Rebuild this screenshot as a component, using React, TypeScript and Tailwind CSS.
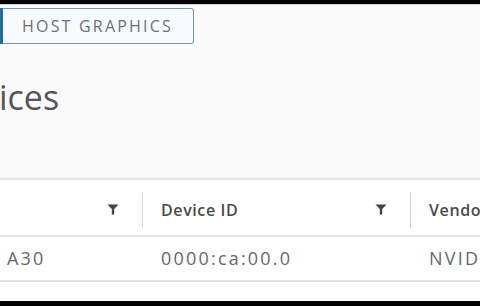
import React from "react";

function Filter({ className = "" }: { className?: string }) {
  return (
    <svg width="12" height="11" viewBox="0 0 12 11" className={className}>
      <path d="M0.5 0.5 H11.5 L7.2 5 V10.5 H4.8 V5 Z" fill="#444" />
    </svg>
  );
}

export default function App() {
  const font = { fontFamily: '"Open Sans", "Noto Sans", sans-serif' };
  return (
    <div className="w-[480px] h-[306px] overflow-hidden bg-black flex flex-col" style={font}>
      <div className="h-[4px] shrink-0 bg-black" />
      <div className="flex-1 flex flex-col bg-[#fafafa] border-t border-[#d4d4d4]">
        <div className="h-[39px] shrink-0 flex items-end">
          <div className="flex h-[36px] w-[194px]">
            <div className="w-[3px] h-full bg-[#1d6fa8]" />
            <div className="flex-1 h-full border border-l-0 border-[#6f9bbd] rounded-r-[3px] bg-[#f7fbff] flex items-center pl-[19px] text-[16px] tracking-[2.2px] text-[#707070] whitespace-nowrap">
              HOST GRAPHICS
            </div>
          </div>
        </div>
        <div className="h-[134px] shrink-0 pt-[33px]">
          <div className="text-[34px] leading-[40px] text-[#565656] ml-[-1px]">ices</div>
        </div>
        <div className="flex-1 bg-white flex flex-col">
          <div className="border-t-2 border-[#e3e3e3] h-[59px] flex items-center pt-[4px] border-b-2 border-b-[#e3e3e3]">
            <div className="w-[142px] h-full flex items-center justify-end pr-[23px]">
              <Filter />
            </div>
            <div className="w-[1px] h-[34px] bg-[#d8d8d8]" />
            <div className="w-[267px] h-full flex items-center justify-between pl-[18px] pr-[23px]">
              <span className="text-[16px] tracking-[0.6px] font-semibold text-[#4a4a4a]">Device ID</span>
              <Filter />
            </div>
            <div className="w-[1px] h-[36px] bg-[#d8d8d8]" />
            <div className="flex-1 min-w-0 h-full flex items-center pl-[18px] overflow-hidden whitespace-nowrap">
              <span className="text-[16px] tracking-[0.6px] font-semibold text-[#4a4a4a]">Vendor</span>
            </div>
          </div>
          <div className="h-[45px] flex items-center border-b-2 border-[#e3e3e3] text-[18px] tracking-[2.2px] text-[#686868] whitespace-nowrap">
            <div className="w-[143px] shrink-0 pl-[7px]">A30</div>
            <div className="w-[268px] shrink-0 pl-[18px]">0000:ca:00.0</div>
            <div className="flex-1 min-w-0 pl-[18px] overflow-hidden">NVIDIA</div>
          </div>
          <div className="flex-1" />
        </div>
      </div>
      <div className="h-[5px] shrink-0 bg-black" />
    </div>
  );
}
